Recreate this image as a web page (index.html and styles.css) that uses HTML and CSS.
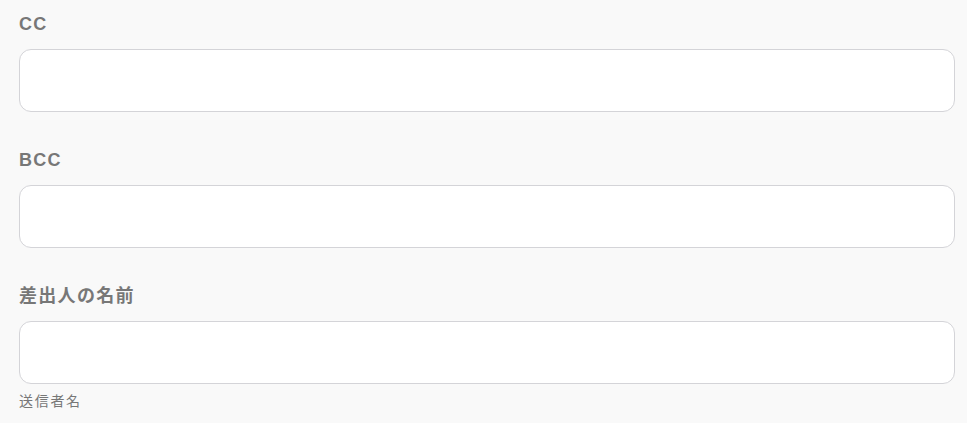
FILE: index.html
```html
<!DOCTYPE html>
<html lang="ja">
<head>
<meta charset="utf-8">
<link rel="stylesheet" href="styles.css">
</head>
<body>
<div class="form">
  <div class="field">
    <label class="label">CC</label>
    <div class="input"></div>
  </div>
  <div class="field">
    <label class="label">BCC</label>
    <div class="input"></div>
  </div>
  <div class="field">
    <label class="label">差出人の名前</label>
    <div class="input"></div>
    <div class="help">送信者名</div>
  </div>
</div>
</body>
</html>
```
FILE: styles.css
```css
html, body {
  margin: 0;
  padding: 0;
  background: #f9f9f9;
}
body {
  font-family: "Liberation Sans", "Noto Sans CJK JP", sans-serif;
}
.form {
  padding: 12px 12px 0 19px;
  display: flex;
  flex-direction: column;
  gap: 36px;
}
.field {
  display: flex;
  flex-direction: column;
}
.label {
  font-size: 18px;
  font-weight: 700;
  color: #777777;
  letter-spacing: 1.3px;
  line-height: 24px;
  height: 24px;
  margin-bottom: 13px;
}
.input {
  height: 61px;
  background: #ffffff;
  border: 1px solid #d4d4d8;
  border-radius: 12px;
}
.help {
  margin-top: 7px;
  font-size: 14px;
  color: #777777;
  letter-spacing: 1.7px;
  line-height: 20px;
}
```
